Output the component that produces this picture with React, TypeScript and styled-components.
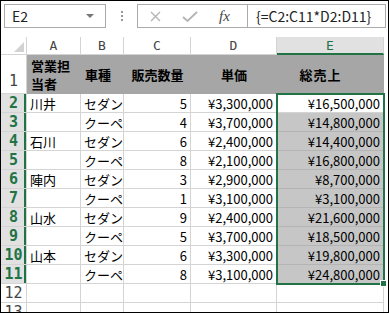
import React from 'react'
import styled, { createGlobalStyle, css } from 'styled-components'

const GREEN = '#217346'
const GRID = '#d4d4d4'
const JP = `"Noto Sans CJK JP", "Noto Sans", sans-serif`
const MONO = `"DejaVu Sans Mono", "Liberation Mono", monospace`

const GlobalStyle = createGlobalStyle`
	html, body {
		margin: 0;
		padding: 0;
		background: #fff;
	}
	body {
		font-family: ${JP};
	}
`

const Frame = styled.div`
	width: 389px;
	height: 313px;
	box-sizing: border-box;
	border: 1px solid #000;
	overflow: hidden;
	background: #fff;
`

const FormulaBar = styled.div`
	display: flex;
	align-items: flex-start;
	height: 36px;
	box-sizing: border-box;
	padding: 3px 0 0 3px;
`

const NameBox = styled.div`
	width: 102px;
	height: 24px;
	box-sizing: border-box;
	border: 1px solid #ababab;
	display: flex;
	align-items: center;
	justify-content: space-between;
	padding: 0 11px 0 7px;
	font-size: 14px;
	color: #222;
`

const DropArrow = styled.div`
	width: 0;
	height: 0;
	border-left: 4px solid transparent;
	border-right: 4px solid transparent;
	border-top: 4px solid #777;
`

const Grip = styled.div`
	width: 31px;
	height: 24px;
	display: flex;
	flex-direction: column;
	align-items: center;
	justify-content: center;
	gap: 2px;
`

const GripDot = styled.span`
	width: 2px;
	height: 2px;
	background: #999;
`

const FxBox = styled.div`
	width: 249px;
	height: 24px;
	box-sizing: border-box;
	border: 1px solid #ababab;
	display: flex;
`

const IconArea = styled.div`
	width: 110px;
	display: flex;
	align-items: center;
	padding-left: 12px;
	box-sizing: border-box;
	border-right: 1px solid #ababab;
	gap: 21px;
`

const FxLabel = styled.span`
	font-family: "Liberation Serif", serif;
	font-style: italic;
	font-size: 15px;
	color: #444;
`

const FormulaText = styled.div`
	flex: 1;
	display: flex;
	align-items: center;
	padding-left: 8px;
	font-size: 14px;
	color: #222;
	white-space: nowrap;
`

const Sheet = styled.div`
	display: grid;
	grid-template-columns: 26px 54px 43px 67px 86px 107px;
	grid-template-rows: 18px 39px repeat(12, 19px);
`

interface PlaceProps {
	$r: number
	$c: number
}

const place = css<PlaceProps>`
	grid-row: ${(p) => p.$r};
	grid-column: ${(p) => p.$c};
	box-sizing: border-box;
	min-width: 0;
`

const Corner = styled.div<PlaceProps>`
	${place}
	border-right: 1px solid ${GRID};
	border-bottom: 1px solid ${GRID};
	display: flex;
	align-items: flex-end;
	justify-content: flex-end;
	padding: 0 2px 2px 0;
`

const ColHead = styled.div<PlaceProps & { $active?: boolean }>`
	${place}
	display: flex;
	align-items: center;
	justify-content: center;
	font-family: ${MONO};
	font-size: 13px;
	color: ${(p) => (p.$active ? GREEN : '#444')};
	background: ${(p) => (p.$active ? '#e1e1e1' : '#fff')};
	border-right: 1px solid ${GRID};
	border-bottom: ${(p) => (p.$active ? `2px solid ${GREEN}` : `1px solid ${GRID}`)};
`

const RowHead = styled.div<PlaceProps & { $active?: boolean; $tall?: boolean }>`
	${place}
	display: flex;
	align-items: ${(p) => (p.$tall ? 'flex-end' : 'center')};
	justify-content: center;
	padding-bottom: ${(p) => (p.$tall ? '3px' : '0')};
	font-family: ${MONO};
	font-size: 15px;
	font-weight: ${(p) => (p.$active ? 700 : 400)};
	color: ${(p) => (p.$active ? GREEN : '#444')};
	background: ${(p) => (p.$active ? '#e1e1e1' : '#fff')};
	border-bottom: 1px solid ${GRID};
	border-right: 1px solid ${GRID};
	box-shadow: ${(p) => (p.$active ? `inset -2px 0 0 ${GREEN}` : 'none')};
`

const TitleCell = styled.div<PlaceProps & { $align: 'left' | 'center'; $shift?: number; $spread?: number }>`
	${place}
	display: flex;
	align-items: center;
	justify-content: ${(p) => (p.$align === 'left' ? 'flex-start' : 'center')};
	padding: ${(p) => (p.$align === 'left' ? '0 0 0 4px' : `0 ${p.$shift ?? 0}px 0 0`)};
	background: #a6a6a6;
	font-size: 13px;
	font-weight: 700;
	line-height: 18px;
	letter-spacing: ${(p) => p.$spread ?? 0}px;
	color: #000;
`

const Cell = styled.div<PlaceProps & { $num?: boolean; $selected?: boolean }>`
	${place}
	display: flex;
	align-items: center;
	justify-content: ${(p) => (p.$num ? 'flex-end' : 'flex-start')};
	padding: 0 3px;
	font-size: 13px;
	color: #000;
	white-space: nowrap;
	background: ${(p) => (p.$selected ? '#c6c6c6' : '#fff')};
	border-right: 1px solid ${GRID};
	border-bottom: 1px solid ${(p) => (p.$selected ? '#b4b4b4' : GRID)};
`

const Selection = styled.div`
	grid-row: 3 / 13;
	grid-column: 6;
	margin: -1px;
	border: 2px solid ${GREEN};
	position: relative;
	z-index: 2;
	pointer-events: none;
`

const FillHandle = styled.div`
	position: absolute;
	right: -4px;
	bottom: -4px;
	width: 7px;
	height: 7px;
	box-sizing: border-box;
	border: 1px solid #fff;
	background: ${GREEN};
`

type Row = [string, string, number, string, string]

const rows: Row[] = [
	['川井', 'セダン', 5, '¥3,300,000', '¥16,500,000'],
	['', 'クーペ', 4, '¥3,700,000', '¥14,800,000'],
	['石川', 'セダン', 6, '¥2,400,000', '¥14,400,000'],
	['', 'クーペ', 8, '¥2,100,000', '¥16,800,000'],
	['陣内', 'セダン', 3, '¥2,900,000', '¥8,700,000'],
	['', 'クーペ', 1, '¥3,100,000', '¥3,100,000'],
	['山水', 'セダン', 9, '¥2,400,000', '¥21,600,000'],
	['', 'クーペ', 5, '¥3,700,000', '¥18,500,000'],
	['山本', 'セダン', 6, '¥3,300,000', '¥19,800,000'],
	['', 'クーペ', 8, '¥3,100,000', '¥24,800,000'],
]

const columns = ['A', 'B', 'C', 'D', 'E']

const App = () => {
	return (
		<Frame>
			<GlobalStyle />
			<FormulaBar>
				<NameBox>
					<span>E2</span>
					<DropArrow />
				</NameBox>
				<Grip>
					<GripDot />
					<GripDot />
					<GripDot />
				</Grip>
				<FxBox>
					<IconArea>
						<svg width="11" height="11" viewBox="0 0 11 11">
							<path d="M1 1 L10 10 M10 1 L1 10" stroke="#b4b4b4" strokeWidth="1.4" fill="none" />
						</svg>
						<svg width="16" height="11" viewBox="0 0 16 11">
							<path d="M1 6 L5.5 10 L15 1" stroke="#b4b4b4" strokeWidth="1.8" fill="none" />
						</svg>
						<FxLabel>fx</FxLabel>
					</IconArea>
					<FormulaText>{'{=C2:C11*D2:D11}'}</FormulaText>
				</FxBox>
			</FormulaBar>
			<Sheet>
				<Corner $r={1} $c={1}>
					<svg width="10" height="10" viewBox="0 0 10 10">
						<polygon points="10,0 10,10 0,10" fill="#d2d2d2" />
					</svg>
				</Corner>
				{columns.map((c, i) => (
					<ColHead key={c} $r={1} $c={i + 2} $active={c === 'E'}>
						{c}
					</ColHead>
				))}

				<RowHead $r={2} $c={1} $tall>
					1
				</RowHead>
				<TitleCell $r={2} $c={2} $align="left">
					営業担
					<br />
					当者
				</TitleCell>
				<TitleCell $r={2} $c={3} $align="left">
					車種
				</TitleCell>
				<TitleCell $r={2} $c={4} $align="center">
					販売数量
				</TitleCell>
				<TitleCell $r={2} $c={5} $align="center">
					単価
				</TitleCell>
				<TitleCell $r={2} $c={6} $align="center" $shift={20} $spread={1}>
					総売上
				</TitleCell>

				{rows.map(([name, kind, qty, price, total], i) => {
					const r = i + 3
					return (
						<React.Fragment key={r}>
							<RowHead $r={r} $c={1} $active>
								{i + 2}
							</RowHead>
							<Cell $r={r} $c={2}>{name}</Cell>
							<Cell $r={r} $c={3}>{kind}</Cell>
							<Cell $r={r} $c={4} $num>{qty}</Cell>
							<Cell $r={r} $c={5} $num>{price}</Cell>
							<Cell $r={r} $c={6} $num $selected={i > 0}>{total}</Cell>
						</React.Fragment>
					)
				})}

				{[13, 14].map((r) => (
					<React.Fragment key={r}>
						<RowHead $r={r} $c={1}>{r - 1}</RowHead>
						{columns.map((c, i) => (
							<Cell key={c} $r={r} $c={i + 2} />
						))}
					</React.Fragment>
				))}

				<Selection>
					<FillHandle />
				</Selection>
			</Sheet>
		</Frame>
	)
}

export default App
